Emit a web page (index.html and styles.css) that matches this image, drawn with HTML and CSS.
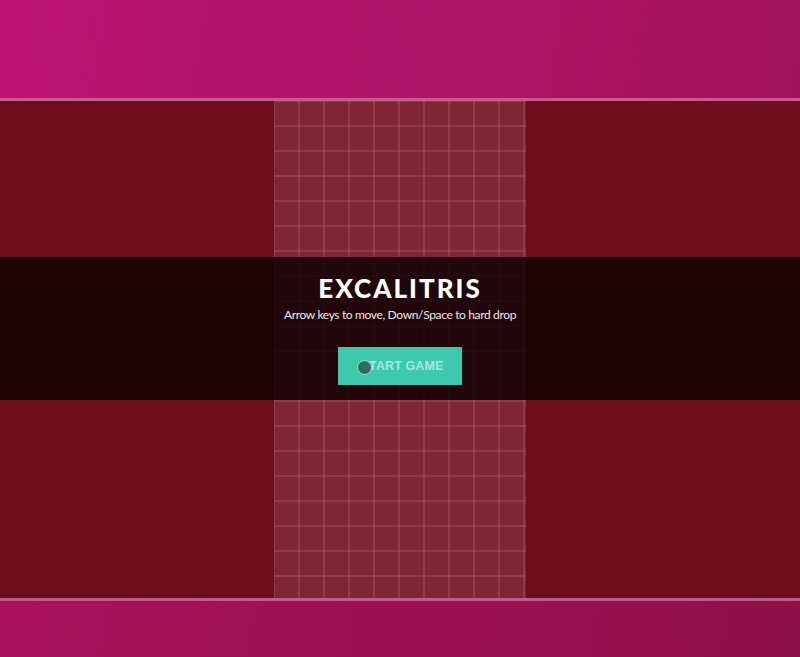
FILE: index.html
```html
<!DOCTYPE html>
<html lang="en">
<head>
<meta charset="utf-8">
<title>Excalitris</title>
<link rel="stylesheet" href="styles.css">
</head>
<body>
<div class="page">
  <header class="band band-top"></header>
  <main class="stage">
    <div class="side"></div>
    <div class="board"></div>
    <div class="side"></div>
    <div class="overlay">
      <h1 class="title">EXCALITRIS</h1>
      <p class="hint">Arrow keys to move, Down/Space to hard drop</p>
      <button class="start">START GAME<span class="cursor"></span></button>
    </div>
  </main>
  <footer class="band band-bottom"></footer>
</div>
</body>
</html>
```
FILE: styles.css
```css
html, body {
  margin: 0;
  padding: 0;
  height: 100%;
}
body {
  background: #6c0e1b;
  font-family: "Lato", "Open Sans", sans-serif;
  overflow: hidden;
}
.page {
  display: flex;
  flex-direction: column;
  height: 657px;
}
.band {
  flex: none;
}
.band-top {
  height: 98px;
  background: linear-gradient(100deg, #bb1471 0%, #b01467 55%, #a2125c 100%);
  border-bottom: 3px solid #c95a8d;
}
.band-bottom {
  flex: 1;
  background: linear-gradient(100deg, #a8115e 0%, #991051 55%, #8e0f48 100%);
  border-top: 3px solid #c45a88;
}
.stage {
  position: relative;
  display: flex;
  height: 497px;
  flex: none;
}
.side {
  flex: 1;
  background: #6c0e1b;
}
.board {
  width: 252px;
  flex: none;
  background-color: #7e2633;
  background-image:
    linear-gradient(to right, rgba(180, 95, 108, 0.36) 2px, transparent 2px),
    linear-gradient(to bottom, rgba(180, 95, 108, 0.36) 2px, transparent 2px);
  background-size: 25px 25px;
  background-position: -1px -1px;
}
.overlay {
  position: absolute;
  left: 0;
  right: 0;
  top: 156px;
  height: 143px;
  background: rgba(12, 0, 2, 0.82);
  display: flex;
  flex-direction: column;
  align-items: center;
}
.title {
  margin: 16px 0 0;
  color: #ffffff;
  font-family: "Lato", sans-serif;
  font-weight: 900;
  font-size: 26px;
  letter-spacing: 2px;
  line-height: 30px;
}
.hint {
  margin: 4px 0 0;
  color: #f1e6e8;
  font-size: 12px;
  letter-spacing: -0.35px;
  line-height: 16px;
  font-family: "Lato", sans-serif;
}
.start {
  position: relative;
  margin-top: 24px;
  width: 124px;
  height: 38px;
  border: none;
  padding: 0 0 0 4px;
  background: #3ec9ad;
  color: #a9e5e8;
  font-family: "Liberation Sans", Arial, sans-serif;
  font-weight: bold;
  font-size: 12.5px;
  letter-spacing: 0.1px;
  cursor: pointer;
}
.cursor {
  position: absolute;
  left: 19px;
  top: 13px;
  width: 13px;
  height: 13px;
  border-radius: 50%;
  background: #2c6d60;
  border: 1px solid #9fe0d6;
}
```
